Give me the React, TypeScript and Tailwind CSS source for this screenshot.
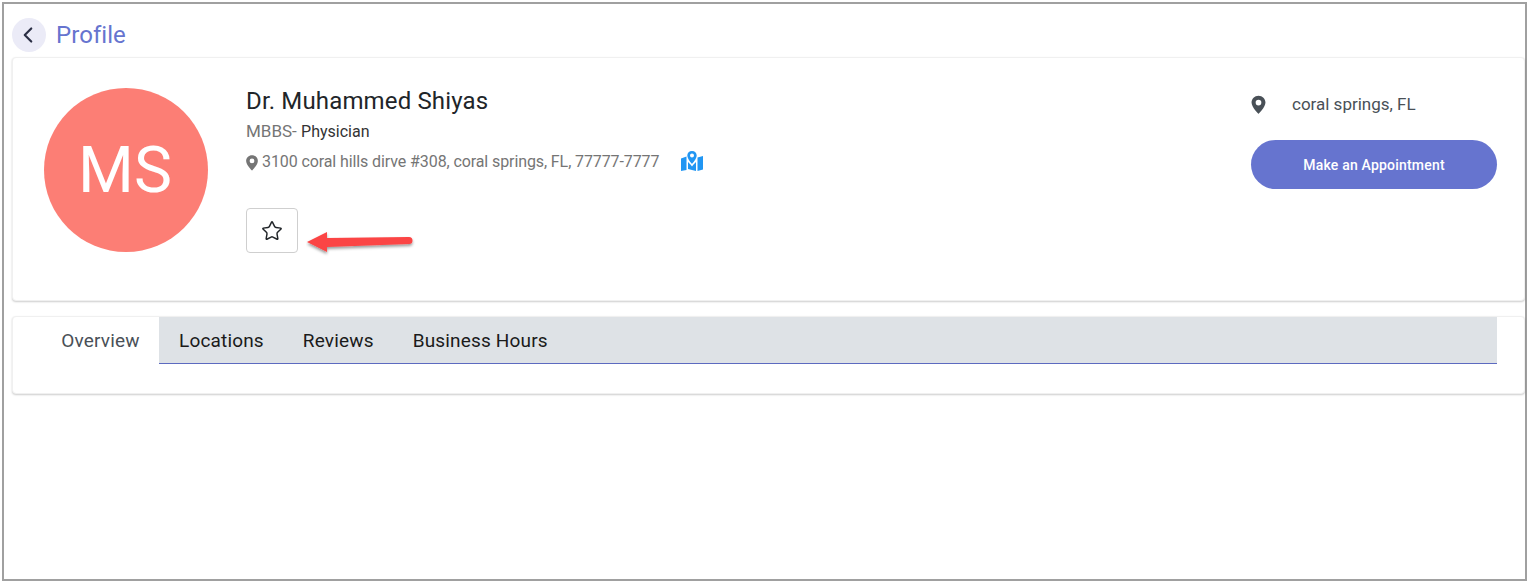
import React from "react";
import { ChevronLeft, Star } from "lucide-react";

const PinIcon = ({ className }: { className: string }) => (
  <svg viewBox="0 0 24 24" className={className} fill="currentColor">
    <path
      fillRule="evenodd"
      d="M12 1C7 1 3.2 4.8 3.2 9.6 3.2 15.6 12 24 12 24s8.8-8.4 8.8-14.4C20.8 4.8 17 1 12 1zm0 12.2a3.6 3.6 0 1 1 0-7.2 3.6 3.6 0 0 1 0 7.2z"
    />
  </svg>
);

const MapIcon = () => (
  <svg viewBox="0 0 22 20" className="w-[22px] h-[20px]" fill="#2196f3">
    <path d="M0 7.5 5.5 5.5 5.5 19 0 20z" />
    <path d="M16.5 6.5 22 5 22 18.5 16.5 20z" />
    <path d="M7 11 9.5 13.5 11 15.5 12.5 13.5 15 11 15 20 7 18z" />
    <path
      fillRule="evenodd"
      d="M11 0C8.2 0 6.3 2 6.3 4.6 6.3 8 11 13 11 13s4.700-5 4.700-8.400C15.700 2 13.800 0 11 0zm0 6.500a2 2 0 1 1 0-4 2 2 0 0 1 0 4z"
    />
  </svg>
);

const tabs = ["Locations", "Reviews", "Business Hours"];

const App: React.FC = () => {
  return (
    <div className="w-[1527px] h-[581px] bg-white pl-[2px] pt-[2px] font-['Roboto',sans-serif]">
      <div className="w-full h-full border-2 border-[#a0a0a0] pl-2 pt-[14px]">
        <div className="flex items-center gap-[10px] h-[34px]">
          <button className="w-[34px] h-[34px] rounded-full bg-[#ebebf7] flex items-center justify-center text-[#2b2f45]">
            <ChevronLeft size={26} strokeWidth={2} className="-ml-[2px]" />
          </button>
          <div className="text-[24px] tracking-[0.05px] text-[#6674cf]">Profile</div>
        </div>

        <div className="relative mt-[5px] h-[244px] bg-white rounded-[4px] border border-[#f0f0f0] shadow-[0_1px_2px_rgba(0,0,0,0.2)] flex pl-[31px] pt-[30px]">
          <div className="w-[164px] h-[164px] rounded-full bg-[#fc7e75] flex items-center justify-center text-white text-[64px] pt-[1px] pr-[2px]">
            MS
          </div>
          <div className="ml-[38px]">
            <div className="text-[24px] leading-[28px] tracking-[0.15px] text-[#212529] -mt-[1px]">
              Dr. Muhammed Shiyas
            </div>
            <div className="mt-[4px] text-[17px] leading-[24px] text-[#757575]">
              MBBS- <span className="text-[16px] text-[#333333]">Physician</span>
            </div>
            <div className="mt-[6px] flex items-center text-[16px] leading-[24px] tracking-[-0.1px] text-[#757575]">
              <PinIcon className="w-[16px] h-[17px] -ml-[2px] mr-[2px]" />
              <span>3100 coral hills dirve #308, coral springs, FL, 77777-7777</span>
              <span className="ml-[22px] -mt-[2px]">
                <MapIcon />
              </span>
            </div>
            <button className="mt-[34px] w-[52px] h-[45px] rounded-[4px] border border-[#cfcfcf] flex items-center justify-center text-[#212529]">
              <Star size={22} strokeWidth={1.6} />
            </button>
          </div>

          <div className="ml-auto mr-[27px] w-[246px] pt-[1px]">
            <div className="flex items-center h-[32px] text-[17px] text-[#495057]">
              <PinIcon className="w-[19px] h-[19px] -ml-[2px] -mt-[2px] text-[#495057]" />
              <span className="ml-[24px]">coral springs, FL</span>
            </div>
            <button className="mt-[19px] w-[246px] h-[49px] pt-[2px] rounded-full bg-[#6674cf] text-white text-[14px] tracking-[0.2px] font-medium">
              Make an Appointment
            </button>
          </div>

          {/* red annotation arrow drawn over the screenshot */}
          <svg
            viewBox="0 0 110 30"
            className="absolute left-[293px] top-[170px] w-[110px] h-[30px]"
          >
            <defs>
              <filter id="arrowShadow" x="-10%" y="-30%" width="120%" height="180%">
                <feDropShadow dx="0" dy="2" stdDeviation="1.5" floodColor="#000" floodOpacity="0.4" />
              </filter>
            </defs>
            <path
              d="M1 14 L21 4 L21 10 L103 9 a3.500 3.500 0 0 1 0 7 L21 19 L21 24z"
              fill="#fb4444"
              filter="url(#arrowShadow)"
            />
          </svg>
        </div>

        <div className="mt-[15px] h-[78px] bg-white rounded-[4px] border border-[#f0f0f0] shadow-[0_1px_2px_rgba(0,0,0,0.2)] pl-[29px] pr-[27px]">
          <div className="flex h-[47px] text-[19px] tracking-[0.17px]">
            <div className="w-[117px] pt-[2px] flex items-center justify-center text-[#495057]">Overview</div>
            <div className="flex-1 flex items-center pt-[2px] bg-[#dee2e6] border-b border-[#5c6ac0] text-[#1a1a1a] pl-[20px] gap-[39px]">
              {tabs.map((tab) => (
                <div key={tab}>{tab}</div>
              ))}
            </div>
          </div>
        </div>
      </div>
    </div>
  );
};

export default App;
